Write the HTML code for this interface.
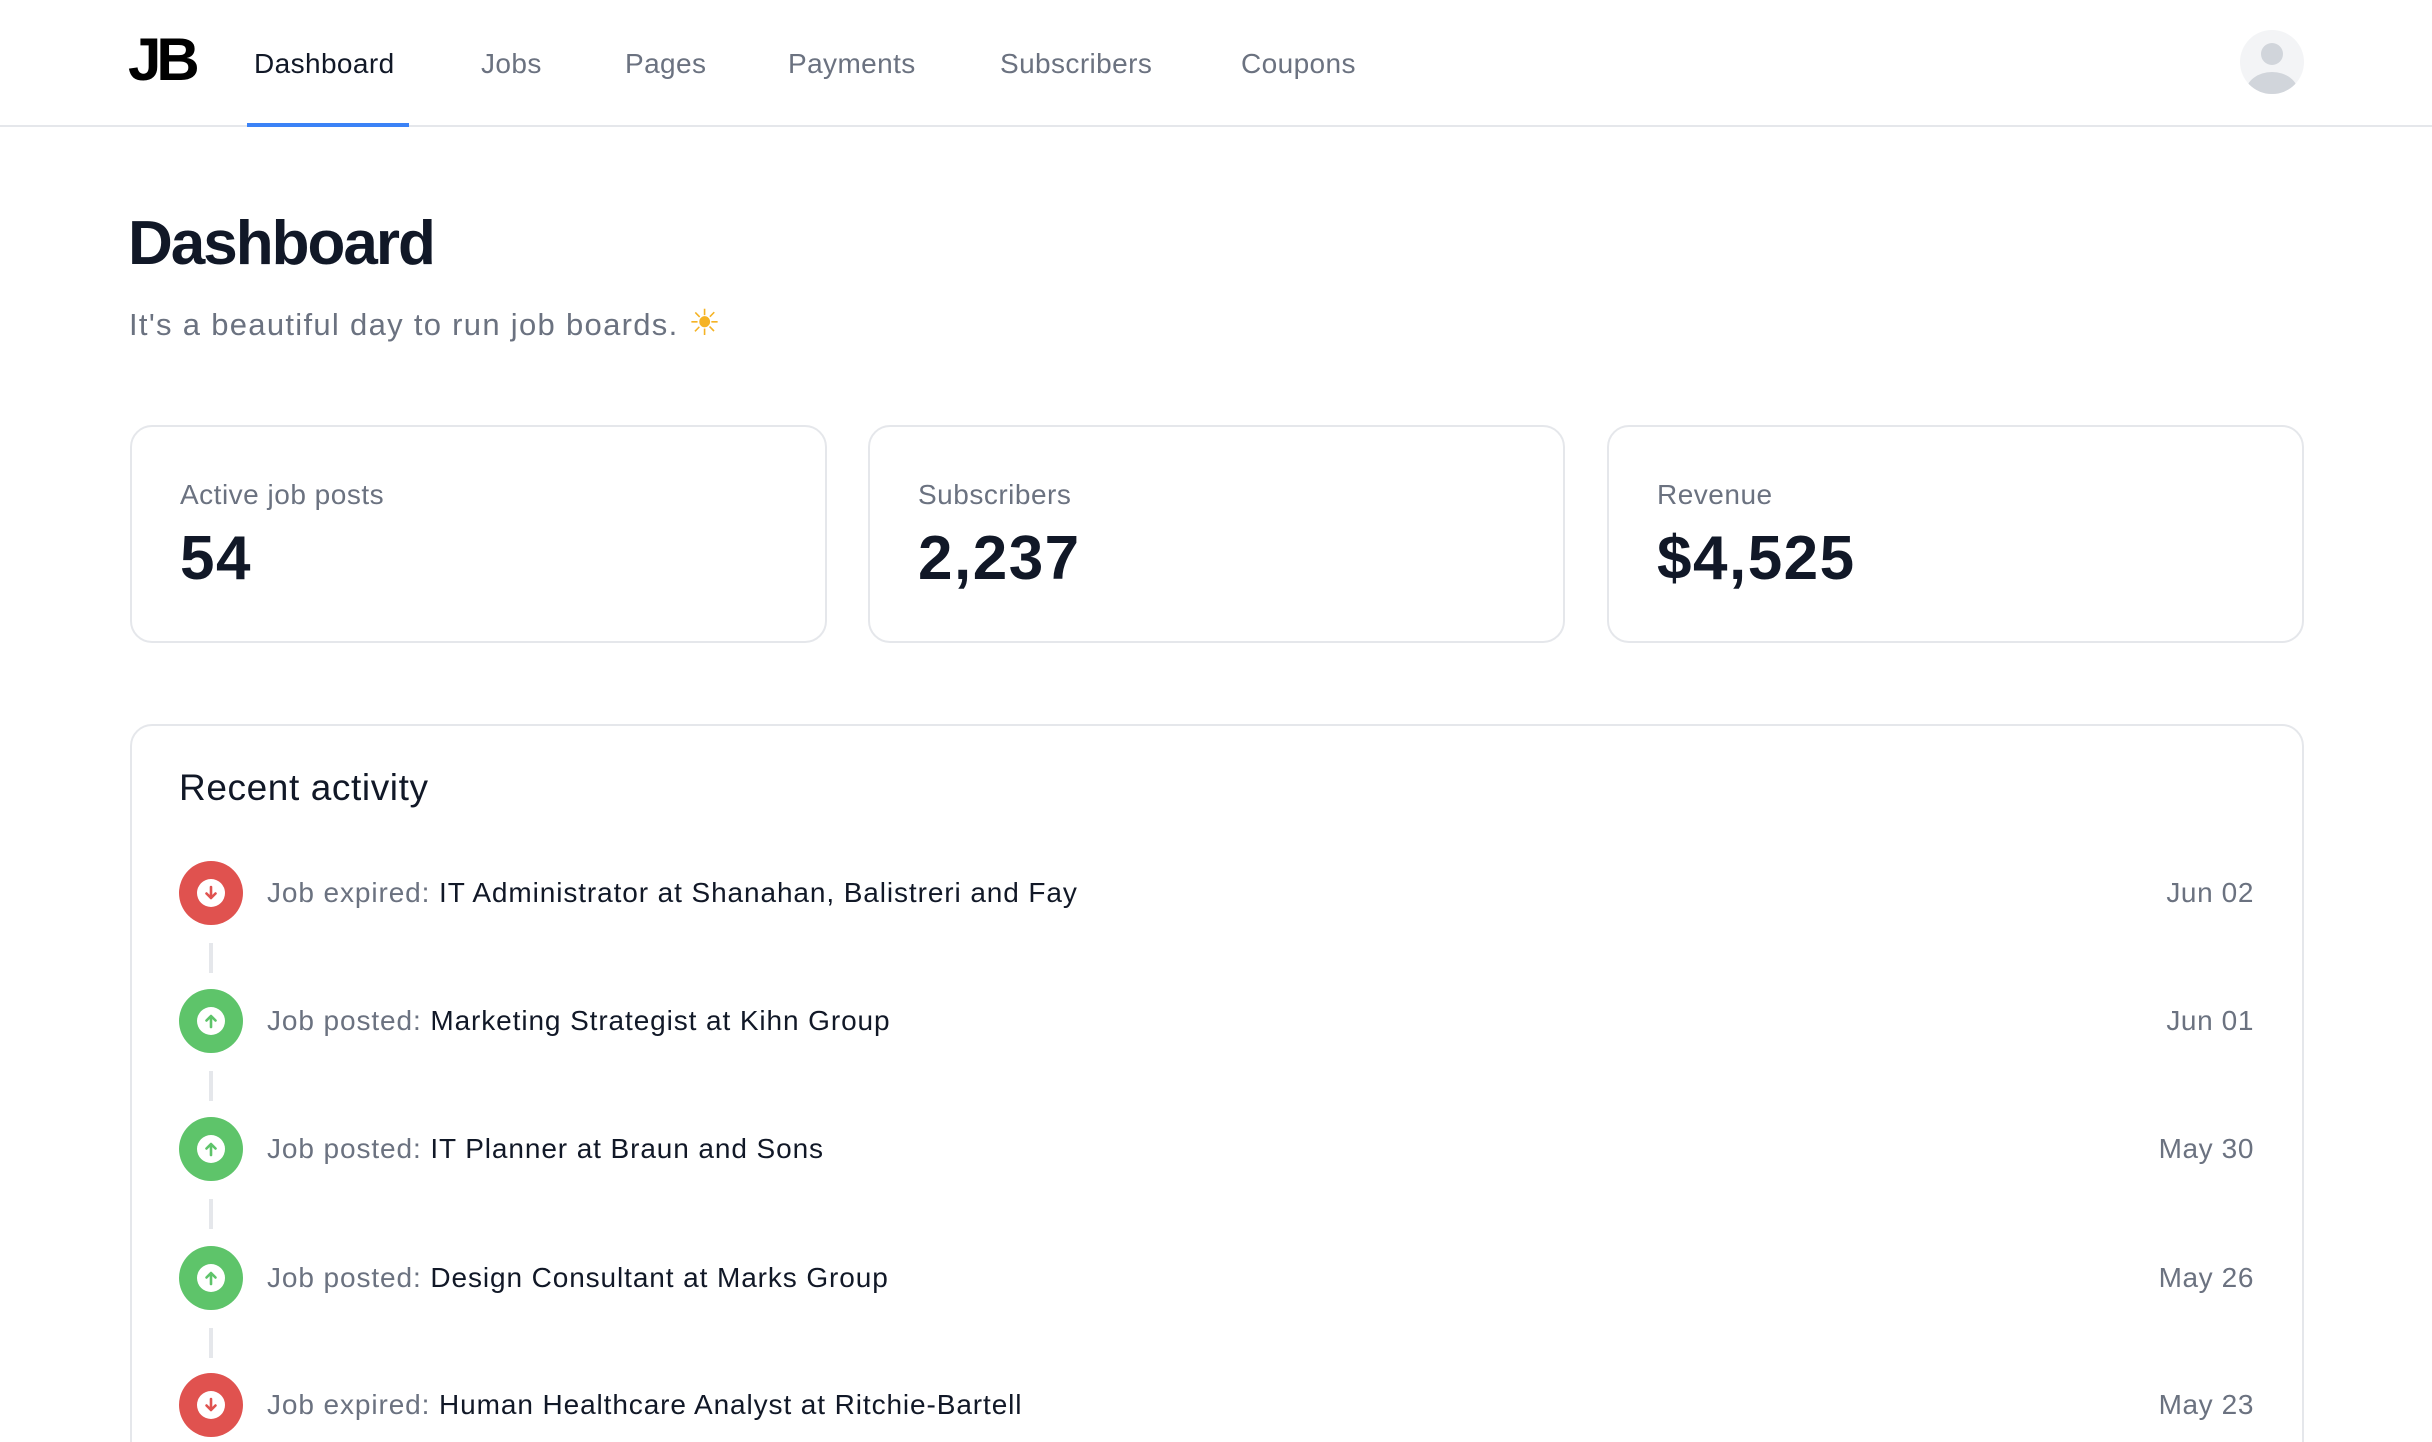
<!DOCTYPE html>
<html><head><meta charset="utf-8"><style>
*{margin:0;padding:0;box-sizing:border-box}
html,body{width:2432px;height:1442px;overflow:hidden}
body{background:#fff;font-family:"Liberation Sans",sans-serif;color:#111827;position:relative}
#wrap{position:absolute;left:0;top:0;width:2432px;height:1442px;overflow:hidden}
.abs{position:absolute;white-space:nowrap}
.nav{position:absolute;left:0;top:0;width:2432px;height:127px;border-bottom:2px solid #e5e7eb}
.logo{left:128px;top:30px;font-size:60px;font-weight:bold;letter-spacing:-5px;color:#000;line-height:1}
.ni{top:47px;font-size:28px;color:#6b7280;line-height:34px;letter-spacing:0.4px}
.ul{left:247px;top:123px;width:162px;height:4px;background:#3b82f6}
.card{position:absolute;top:425px;height:218px;width:697px;border:2px solid #e5e7eb;border-radius:22px}
.lbl{position:absolute;left:48px;top:52px;font-size:28px;color:#6b7280;letter-spacing:0.5px}
.val{position:absolute;left:48px;top:96px;font-size:62px;font-weight:bold;color:#111827;letter-spacing:1.5px}
.act{position:absolute;left:130px;top:724px;width:2174px;height:760px;border:2px solid #e5e7eb;border-radius:22px}
.row{position:absolute;left:0;width:2432px;height:64px}
.ic{position:absolute;left:179px;top:0;width:64px;height:64px;border-radius:50%}
.ic svg{position:absolute;left:18px;top:18px}
.t{position:absolute;left:267px;top:14px;font-size:28px;color:#6b7280;line-height:36px;letter-spacing:0.9px}
.t b{font-weight:normal;color:#111827}
.d{position:absolute;right:178px;top:14px;font-size:28px;color:#6b7280;line-height:36px;letter-spacing:0.6px}
.ln{position:absolute;left:209px;width:4px;height:30px;background:#e5e7eb}
</style></head><body><div id="wrap">
<div class="nav"></div>
<div class="abs logo">JB</div>
<div class="abs ni" style="left:254px;color:#111827">Dashboard</div>
<div class="abs ni" style="left:481px">Jobs</div>
<div class="abs ni" style="left:625px">Pages</div>
<div class="abs ni" style="left:788px">Payments</div>
<div class="abs ni" style="left:1000px">Subscribers</div>
<div class="abs ni" style="left:1241px">Coupons</div>
<div class="abs ul"></div>
<svg class="abs" style="left:2240px;top:30px" width="64" height="64" viewBox="0 0 64 64"><defs><clipPath id="c"><circle cx="32" cy="32" r="32"/></clipPath></defs><circle cx="32" cy="32" r="32" fill="#f3f4f6"/><g clip-path="url(#c)" fill="#d1d5db"><circle cx="32" cy="24" r="11"/><ellipse cx="32" cy="62" rx="26" ry="20"/></g></svg>

<div class="abs" style="left:128px;top:208px;font-size:62px;font-weight:bold;letter-spacing:-2px;color:#111827">Dashboard</div>
<div class="abs" style="left:129px;top:302px;font-size:31px;color:#6b7280;letter-spacing:1.3px">It's a beautiful day to run job boards. <span style="color:#f5b324;font-size:36px">☀</span></div>

<div class="card" style="left:130px"><div class="lbl">Active job posts</div><div class="val">54</div></div>
<div class="card" style="left:868px"><div class="lbl">Subscribers</div><div class="val">2,237</div></div>
<div class="card" style="left:1607px"><div class="lbl">Revenue</div><div class="val">$4,525</div></div>

<div class="act"></div>
<div class="abs" style="left:179px;top:767px;font-size:37px;color:#111827;letter-spacing:0.6px">Recent activity</div>

<div class="row" style="top:861px"><div class="ic" style="background:#e0524f"><svg width="28" height="28" viewBox="0 0 28 28"><circle cx="14" cy="14" r="14" fill="#fff"/><path d="M14 8v11M9.5 14.5L14 19l4.5-4.5" stroke="#e0524f" stroke-width="2.6" fill="none" stroke-linecap="round" stroke-linejoin="round"/></svg></div><div class="t">Job expired: <b>IT Administrator at Shanahan, Balistreri and Fay</b></div><div class="d">Jun 02</div></div>
<div class="ln" style="top:943px"></div>
<div class="row" style="top:989px"><div class="ic" style="background:#5ec46a"><svg width="28" height="28" viewBox="0 0 28 28"><circle cx="14" cy="14" r="14" fill="#fff"/><path d="M14 20V9M9.5 13.5L14 9l4.5 4.5" stroke="#5ec46a" stroke-width="2.6" fill="none" stroke-linecap="round" stroke-linejoin="round"/></svg></div><div class="t">Job posted: <b>Marketing Strategist at Kihn Group</b></div><div class="d">Jun 01</div></div>
<div class="ln" style="top:1071px"></div>
<div class="row" style="top:1117px"><div class="ic" style="background:#5ec46a"><svg width="28" height="28" viewBox="0 0 28 28"><circle cx="14" cy="14" r="14" fill="#fff"/><path d="M14 20V9M9.5 13.5L14 9l4.5 4.5" stroke="#5ec46a" stroke-width="2.6" fill="none" stroke-linecap="round" stroke-linejoin="round"/></svg></div><div class="t">Job posted: <b>IT Planner at Braun and Sons</b></div><div class="d">May 30</div></div>
<div class="ln" style="top:1199px"></div>
<div class="row" style="top:1246px"><div class="ic" style="background:#5ec46a"><svg width="28" height="28" viewBox="0 0 28 28"><circle cx="14" cy="14" r="14" fill="#fff"/><path d="M14 20V9M9.5 13.5L14 9l4.5 4.5" stroke="#5ec46a" stroke-width="2.6" fill="none" stroke-linecap="round" stroke-linejoin="round"/></svg></div><div class="t">Job posted: <b>Design Consultant at Marks Group</b></div><div class="d">May 26</div></div>
<div class="ln" style="top:1328px"></div>
<div class="row" style="top:1373px"><div class="ic" style="background:#e0524f"><svg width="28" height="28" viewBox="0 0 28 28"><circle cx="14" cy="14" r="14" fill="#fff"/><path d="M14 8v11M9.5 14.5L14 19l4.5-4.5" stroke="#e0524f" stroke-width="2.6" fill="none" stroke-linecap="round" stroke-linejoin="round"/></svg></div><div class="t">Job expired: <b>Human Healthcare Analyst at Ritchie-Bartell</b></div><div class="d">May 23</div></div>
</div></body></html>
